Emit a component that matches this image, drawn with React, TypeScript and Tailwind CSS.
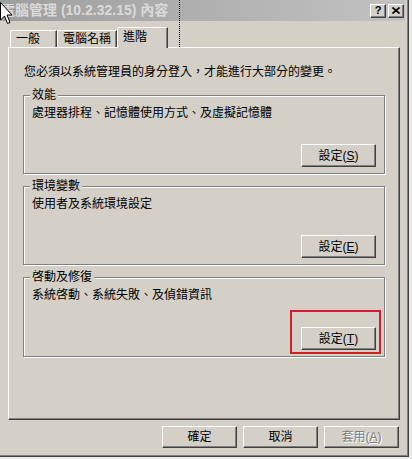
import React from 'react';

const face = 'bg-[#d4d0c8]';

const Btn: React.FC<{ children: React.ReactNode; disabled?: boolean; className?: string }> = ({ children, disabled, className = '' }) => (
  <button
    className={`w-[75px] ${face} border border-t-white border-l-white border-r-[#404040] border-b-[#404040] shadow-[inset_-1px_-1px_0_#808080] text-[12px] leading-none flex items-center justify-center ${
      disabled ? 'text-[#808080] [text-shadow:1px_1px_0_#fff]' : 'text-black'
    } ${className}`}
  >
    {children}
  </button>
);

const Group: React.FC<{ label: string; desc: string; btn: React.ReactNode; className?: string; children?: React.ReactNode }> = ({
  label,
  desc,
  btn,
  className = '',
  children,
}) => (
  <div
    className={`relative flex flex-col justify-between h-[79px] border border-[#808080] shadow-[inset_1px_1px_0_#fff,1px_1px_0_#fff] pl-[8px] pr-[8px] pt-[9px] pb-[6px] ${className}`}
  >
    <span className={`absolute left-[6px] -top-[8px] px-[2px] ${face} leading-[14px]`}>{label}</span>
    <p className="leading-[16px]">{desc}</p>
    <div className="flex justify-end">{btn}</div>
    {children}
  </div>
);

const Cursor = () => (
  <svg className="absolute left-0 top-[2px]" width="13" height="24" viewBox="0 0 13 24">
    <path d="M0.5 0.5 L0.5 18 L4.5 14 L7.5 21.5 L10 20.5 L7 13 L12 13 Z" fill="#fff" stroke="#000" strokeWidth="1" />
  </svg>
);

const App: React.FC = () => {
  return (
    <div className="w-[412px] h-[459px] bg-[#ebebeb] overflow-hidden font-['Liberation_Sans','Noto_Sans_CJK_TC',sans-serif] text-[12px] text-black">
      <div className={`relative w-[409px] h-[457px] ${face} border-r border-b border-[#404040] shadow-[inset_-1px_-1px_0_#808080]`}>
        {/* title bar */}
        <div className="h-[21px] mr-[3px] bg-gradient-to-r from-[#9e9e9e] to-[#c2c2c2] flex items-center justify-between pr-[1px]">
          <span className="pl-[1px] font-bold text-[14px] text-[#dadada]">電腦管理 (10.2.32.15) 內容</span>
          <div className="flex gap-[2px]">
            <div className={`w-[16px] h-[14px] ${face} border border-t-white border-l-white border-r-[#404040] border-b-[#404040] shadow-[inset_-1px_-1px_0_#808080] flex items-center justify-center font-bold text-[11px] leading-none`}>
              ?
            </div>
            <div className={`w-[16px] h-[14px] ${face} border border-t-white border-l-white border-r-[#404040] border-b-[#404040] shadow-[inset_-1px_-1px_0_#808080] flex items-center justify-center`}>
              <svg width="8" height="7" viewBox="0 0 8 7">
                <path d="M0.5 0.5 L7.5 6.5 M7.5 0.5 L0.5 6.5" stroke="#000" strokeWidth="1.6" />
              </svg>
            </div>
          </div>
        </div>
        <Cursor />
        <div className="absolute left-[179px] top-0 h-[47px] border-l border-dotted border-black" />

        {/* body */}
        <div className="pl-[8px] pr-[8px] pt-[6px]">
          {/* tabs */}
          <div className="flex items-end h-[20px] pl-[2px]">
            <div className="w-[47px] h-[17px] border-t border-l border-white border-r border-r-[#404040] shadow-[inset_-1px_0_0_#808080] rounded-tl-[2px] pl-[5px] leading-[17px]">
              一般
            </div>
            <div className="w-[60px] h-[17px] border-t border-l border-white border-r border-r-[#404040] shadow-[inset_-1px_0_0_#808080] rounded-tl-[2px] pl-[5px] leading-[17px]">
              電腦名稱
            </div>
            <div className={`relative z-10 w-[51px] h-[21px] -mb-[1px] ${face} border-t border-l border-white border-r border-r-[#404040] shadow-[inset_-1px_0_0_#808080] rounded-tl-[2px] pl-[5px] leading-[16px] pt-[1px]`}>
              進階
            </div>
          </div>

          {/* panel */}
          <div className="h-[373px] border-t border-l border-white border-r border-b border-r-[#404040] border-b-[#404040] shadow-[inset_-1px_-1px_0_#808080] px-[14px] pt-[16px]">
            <p className="leading-[16px] pl-[1px]">您必須以系統管理員的身分登入，才能進行大部分的變更。</p>
            <div className="mt-[15px] flex flex-col gap-[12px]">
              <Group
                label="效能"
                desc="處理器排程、記憶體使用方式、及虛擬記憶體"
                btn={<Btn className="h-[23px] w-[74px]">設定(<u>S</u>)</Btn>}
              />
              <Group
                label="環境變數"
                desc="使用者及系統環境設定"
                btn={<Btn className="h-[23px] w-[74px]">設定(<u>E</u>)</Btn>}
              />
              <Group
                label="啓動及修復"
                desc="系統啓動、系統失敗、及偵錯資訊"
                className="h-[80px]"
                btn={<Btn className="h-[23px] w-[74px]">設定(<u>T</u>)</Btn>}
              >
                <div className="absolute left-[266px] top-[32px] w-[91px] h-[44px] border-[2px] border-[#d21f26]" />
              </Group>
            </div>
          </div>

          {/* dialog buttons */}
          <div className="flex justify-end gap-[6px] mt-[6px] pr-[1px]">
            <Btn className="h-[22px]">確定</Btn>
            <Btn className="h-[22px]">取消</Btn>
            <Btn className="h-[22px]" disabled>
              套用(<u>A</u>)
            </Btn>
          </div>
        </div>
      </div>
    </div>
  );
};

export default App;
